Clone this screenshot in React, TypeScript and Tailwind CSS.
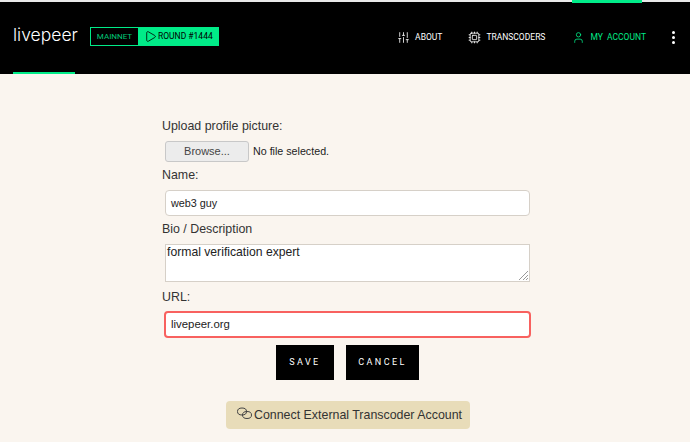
import { SlidersVertical, Cpu, User, Play } from "lucide-react";

const NavItem = ({ icon, label, active }: { icon: React.ReactNode; label: string; active?: boolean }) => (
  <div className={`flex items-center gap-[5px] h-full text-[8.5px] ${active ? "text-[#00eb88]" : "text-white"}`}>
    {icon}
    <span className="whitespace-pre">{label}</span>
  </div>
);

const Label = ({ children }: { children: React.ReactNode }) => (
  <div className="text-[12.4px] leading-[15px] text-[#333]">{children}</div>
);

export default function App() {
  return (
    <div className="w-[690px] h-[442px] overflow-hidden bg-[#faf5ef] font-['Liberation_Sans',sans-serif]">
      <div className="h-[2px] bg-[#e8e8e8]" />
      <header className="h-[72px] bg-black flex font-['Roboto',sans-serif] relative">
        <div className="ml-[13px] h-full relative w-[62px] flex items-start">
          <span className="mt-[22px] text-white text-[17.5px] leading-[22px] font-light font-['Inter',sans-serif]">livepeer</span>
          <div className="absolute bottom-0 left-0 w-[62px] h-[2px] bg-[#00eb88]" />
        </div>
        <div className="ml-[15px] mt-[25px] h-[19px] flex border border-[#00eb88] text-[8px]">
          <div className="w-[47px] flex items-center justify-center text-[#00c877]">MAINNET</div>
          <div className="w-[80px] bg-[#00eb88] text-black text-[8.5px] flex items-center gap-[1px] pl-[6px]">
            <Play size={13} strokeWidth={1.5} />
            <span>ROUND #1444</span>
          </div>
        </div>
        <nav className="ml-auto flex h-full items-center pb-[2px] pr-[15px]">
          <NavItem icon={<SlidersVertical size={13} strokeWidth={1.5} />} label="ABOUT" />
          <div className="w-[26px]" />
          <NavItem icon={<Cpu size={13} strokeWidth={1.5} />} label="TRANSCODERS" />
          <div className="w-[27px]" />
          <div className="h-full relative flex items-center">
            <div className="absolute left-0 top-[-2px] w-[70px] h-[3px] bg-[#00eb88]" />
            <NavItem active icon={<User size={13} strokeWidth={1.5} />} label="MY  ACCOUNT" />
          </div>
          <div className="ml-[25px] w-[4px] flex flex-col items-center gap-[2px]">
            <div className="w-[3px] h-[3px] bg-white rounded-full" />
            <div className="w-[3px] h-[3px] bg-white rounded-full" />
            <div className="w-[3px] h-[3px] bg-white rounded-full" />
          </div>
        </nav>
      </header>

      <main className="ml-[162px] w-[369px] pt-[45px] flex flex-col">
        <Label>Upload profile picture:</Label>
        <div className="mt-[7px] ml-[3px] flex items-center gap-[4px]">
          <div className="w-[84px] h-[21px] border border-[#c8c8c8] rounded-[3px] bg-[#ececec] text-[11px] text-[#444] flex items-center justify-center">Browse...</div>
          <span className="text-[10.7px] text-[#222]">No file selected.</span>
        </div>
        <div className="mt-[6px]"><Label>Name:</Label></div>
        <div className="mt-[7px] ml-[3px] w-[365px] h-[26px] bg-white border border-[#d6d0c8] rounded-[4px] flex items-center px-[5px] text-[10.8px] text-[#222]">web3 guy</div>
        <div className="mt-[6px]"><Label>Bio / Description</Label></div>
        <div className="mt-[7px] ml-[3px] w-[365px] h-[38px] bg-white border border-[#d6d0c8] px-[1px] text-[12.2px] leading-[14px] text-[#222] relative">
          formal verification expert
          <svg className="absolute right-0 bottom-0" width="11" height="11" viewBox="0 0 11 11" stroke="#999" strokeWidth="1">
            <path d="M1 10 L10 1 M5 10 L10 5 M8 10 L10 8" />
          </svg>
        </div>
        <div className="mt-[8px]"><Label>URL:</Label></div>
        <div className="mt-[6px] ml-[2px] w-[367px] h-[27px] bg-white border-2 border-[#f8615f] rounded-[4px] flex items-center px-[5px] text-[11.4px] text-[#222]">livepeer.org</div>
        <div className="mt-[7px] ml-[114px] flex gap-[12px] font-['Roboto',sans-serif]">
          <div className="w-[58px] h-[35px] bg-black text-white text-[9px] tracking-[2.4px] flex items-center justify-center">SAVE</div>
          <div className="w-[73px] h-[35px] bg-black text-white text-[9px] tracking-[2.4px] flex items-center justify-center">CANCEL</div>
        </div>
        <div className="mt-[21px] ml-[64px] w-[244px] h-[28px] bg-[#e8dcb9] rounded-[4px] flex items-center pl-[10px] gap-[1px] text-[12.4px] text-[#333] whitespace-nowrap">
          <svg className="-mt-[5px]" width="17" height="14" viewBox="0 0 17 14" fill="none" stroke="#444" strokeWidth="1">
            <ellipse cx="6" cy="5.5" rx="4.5" ry="3.5" />
            <ellipse cx="11" cy="9" rx="4.5" ry="3.5" />
          </svg>
          <span>Connect External Transcoder Account</span>
        </div>
      </main>
    </div>
  );
}
